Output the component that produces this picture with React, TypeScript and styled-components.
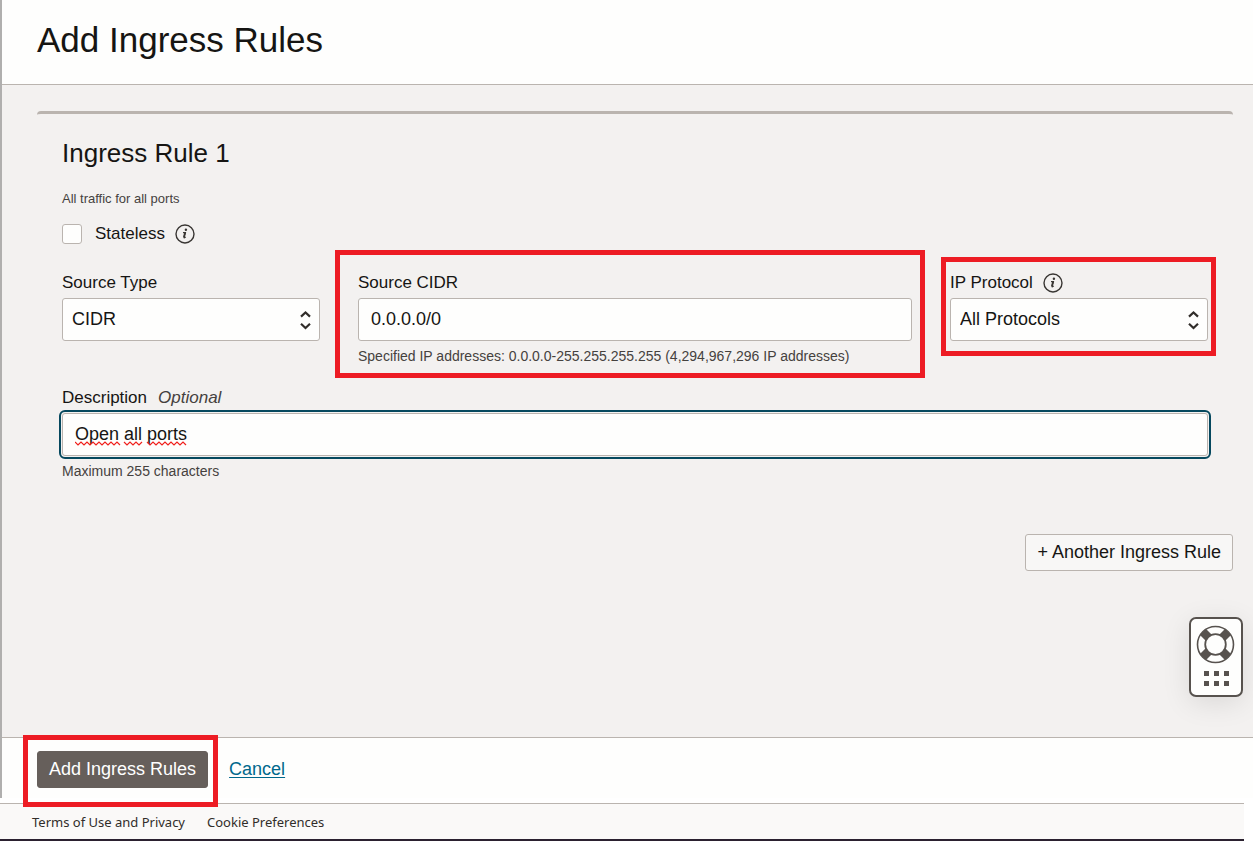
import React from 'react';
import styled, { createGlobalStyle } from 'styled-components';

const GlobalStyle = createGlobalStyle`
  *, *::before, *::after { box-sizing: border-box; }
  body {
    margin: 0;
    background: #ffffff;
    color: #161513;
    font-family: "Liberation Sans", Arial, sans-serif;
  }
`;

const Page = styled.div`
  display: flex;
  flex-direction: column;
  min-height: 100vh;
`;

const Panel = styled.form`
  position: relative;
  flex: 1;
  display: flex;
  flex-direction: column;
  margin-bottom: 5px;
  border-left: 2px solid #b0afae;
  background: #f3f1f0;
`;

const PanelHeader = styled.header`
  padding: 20px 35px 24px;
  border-bottom: 1px solid #bab4af;
  background: #fefefd;
`;

const Title = styled.h1`
  margin: 0;
  font-size: 35px;
  line-height: 40px;
  font-weight: 400;
`;

const PanelBody = styled.main`
  flex: 1;
  padding: 26px 20px 0 35px;
`;

const RuleCard = styled.section`
  padding: 23px 25px 54px;
  border-top: 3px solid #bab4af;
  border-radius: 4px 4px 0 0;
`;

const RuleTitle = styled.h2`
  margin: 0 0 20px;
  font-size: 26px;
  line-height: 32px;
  font-weight: 400;
`;

const Summary = styled.p`
  margin: 0 0 12px;
  font-size: 13px;
  line-height: 20px;
  color: #45413e;
`;

const CheckRow = styled.div`
  display: flex;
  align-items: center;
  height: 26px;
  margin-bottom: 26px;
`;

const Checkbox = styled.input`
  appearance: none;
  width: 20px;
  height: 20px;
  margin: 0 13px 0 0;
  border: 1px solid #bab4af;
  border-radius: 3px;
  background: #fefefd;
`;

const Label = styled.label`
  font-size: 17px;
  line-height: 20px;
`;

const InfoButton = styled.button`
  display: flex;
  margin: 0 0 0 10px;
  padding: 0;
  border: 0;
  background: none;
  color: #393633;
`;

const FieldGrid = styled.div`
  display: grid;
  grid-template-columns: 258px minmax(0, 1fr) 258px;
  column-gap: 38px;
  margin-bottom: 23px;
`;

const Field = styled.div`
  position: relative;
`;

const LabelRow = styled.div`
  display: flex;
  align-items: center;
  height: 20px;
  margin-bottom: 5px;
`;

const Optional = styled.em`
  margin-left: 11px;
  font-size: 17px;
  line-height: 20px;
  color: #45413e;
`;

const Control = styled.div`
  position: relative;
`;

const TextInput = styled.input<{ $focused?: boolean }>`
  display: block;
  width: 100%;
  height: 43px;
  padding: 0 12px;
  border: 1px solid #bab4af;
  border-radius: 3px;
  outline: ${(p) => (p.$focused ? '2px solid #05485e' : 'none')};
  outline-offset: 1px;
  background: #fefefd;
  color: #161513;
  font: 18px "Liberation Sans", Arial, sans-serif;
`;

const Select = styled.select`
  appearance: none;
  display: block;
  width: 100%;
  height: 43px;
  padding: 0 32px 2px 9px;
  border: 1px solid #bab4af;
  border-radius: 3px;
  background: #fefefd;
  color: #161513;
  font: 18px "Liberation Sans", Arial, sans-serif;
`;

const SelectArrows = styled.svg`
  position: absolute;
  top: 12px;
  right: 8px;
  pointer-events: none;
`;

const Squiggles = styled.svg`
  position: absolute;
  top: 28px;
  left: 13px;
  pointer-events: none;
`;

const Hint = styled.p`
  margin: 6px 0 0;
  font-size: 14px;
  line-height: 18px;
  color: #45413e;
`;

const Highlight = styled.span<{ $inset: string }>`
  position: absolute;
  inset: ${(p) => p.$inset};
  border: 5px solid #ed1c24;
  pointer-events: none;
`;

const AddRow = styled.div`
  display: flex;
  justify-content: flex-end;
`;

const Button = styled.button<{ $primary?: boolean }>`
  height: 37px;
  padding: 0 11px 1px;
  border: 1px solid ${(p) => (p.$primary ? '#665f5b' : '#bab4af')};
  border-radius: 3px;
  background: ${(p) => (p.$primary ? '#665f5b' : '#f8f7f6')};
  color: ${(p) => (p.$primary ? '#ffffff' : '#161513')};
  font: 18px "Liberation Sans", Arial, sans-serif;
  white-space: nowrap;
`;

const Actions = styled.div`
  display: flex;
  align-items: flex-start;
  gap: 21px;
  height: 61px;
  padding: 13px 35px 0;
  border-top: 1px solid #bab4af;
  background: #fefefd;
`;

const Submit = styled.div`
  position: relative;
`;

const CancelLink = styled.a`
  color: #00688c;
  font-size: 18px;
  line-height: 36px;
  text-underline-offset: 2px;
`;

const HelpWidget = styled.button`
  position: absolute;
  right: 10px;
  bottom: 101px;
  display: flex;
  flex-direction: column;
  align-items: center;
  width: 54px;
  height: 80px;
  padding: 0;
  border: 2px solid #57524e;
  border-radius: 7px;
  background: #fefefd;
  box-shadow: 0 6px 28px rgba(0, 0, 0, 0.1);
`;

const PageFooter = styled.footer`
  display: flex;
  gap: 22px;
  height: 38px;
  margin-right: 9px;
  padding: 8px 32px 0;
  border-top: 1px solid #bab4af;
  border-bottom: 2px solid #2b2130;
  background: #faf9f8;
`;

const FooterLink = styled.a`
  color: #312d2a;
  font: 13px/20px "Noto Sans", "Segoe UI", sans-serif;
  text-decoration: none;
`;

function Info({ about }: { about: string }) {
  return (
    <InfoButton type="button" aria-label={`About ${about}`}>
      <svg width="20" height="20" viewBox="0 0 20 20" fill="none" stroke="currentColor">
        <circle cx="10" cy="10" r="9" strokeWidth="1.4" />
        <circle cx="10.9" cy="5.7" r="1.2" fill="currentColor" stroke="none" />
        <path d="M8 8.600h2.400L9 13.200c-.2.8.4.9 1.800-.3" strokeWidth="1.2" />
        <path d="M10.200 8.600 8.900 13" strokeWidth="1.8" />
      </svg>
    </InfoButton>
  );
}

function Arrows() {
  return (
    <SelectArrows width="12" height="20" viewBox="0 0 12 20" fill="none" stroke="#312d2a" strokeWidth="2.2" aria-hidden="true">
      <path d="M1 6.600 5.500 2.400l4.500 4.200M1 13.800l4.500 4.200 4.500-4.200" />
    </SelectArrows>
  );
}

function zigzag(from: number, to: number) {
  let d = `M${from} 1`;
  for (let x = from + 3, up = false; x <= to; x += 3, up = !up) d += `L${x} ${up ? 1 : 4}`;
  return d;
}

const misspelled = [[0, 45], [49, 67], [72, 112]];

export default function App() {
  return (
    <Page>
      <GlobalStyle />
      <Panel onSubmit={(e) => e.preventDefault()}>
        <PanelHeader>
          <Title>Add Ingress Rules</Title>
        </PanelHeader>
        <PanelBody>
          <RuleCard>
            <RuleTitle>Ingress Rule 1</RuleTitle>
            <Summary>All traffic for all ports</Summary>
            <CheckRow>
              <Checkbox id="stateless" type="checkbox" />
              <Label htmlFor="stateless">Stateless</Label>
              <Info about="Stateless" />
            </CheckRow>
            <FieldGrid>
              <Field>
                <LabelRow>
                  <Label htmlFor="source-type">Source Type</Label>
                </LabelRow>
                <Control>
                  <Select id="source-type" defaultValue="CIDR">
                    <option>CIDR</option>
                  </Select>
                  <Arrows />
                </Control>
              </Field>
              <Field>
                <LabelRow>
                  <Label htmlFor="source-cidr">Source CIDR</Label>
                </LabelRow>
                <TextInput id="source-cidr" type="text" defaultValue="0.0.0.0/0" />
                <Hint>Specified IP addresses: 0.0.0.0-255.255.255.255 (4,294,967,296 IP addresses)</Hint>
                <Highlight $inset="-23px -13px -13px -23px" />
              </Field>
              <Field>
                <LabelRow>
                  <Label htmlFor="ip-protocol">IP Protocol</Label>
                  <Info about="IP Protocol" />
                </LabelRow>
                <Control>
                  <Select id="ip-protocol" defaultValue="All Protocols">
                    <option>All Protocols</option>
                  </Select>
                  <Arrows />
                  <Highlight $inset="-41px -8px -15px -9px" />
                </Control>
              </Field>
            </FieldGrid>
            <Field>
              <LabelRow>
                <Label htmlFor="description">Description</Label>
                <Optional>Optional</Optional>
              </LabelRow>
              <Control>
                <TextInput id="description" type="text" defaultValue="Open all ports" spellCheck={false} maxLength={255} $focused />
                <Squiggles width="113" height="5" viewBox="0 0 113 5" fill="none" stroke="#f0201c" strokeWidth="1.2" aria-hidden="true">
                  {misspelled.map(([from, to]) => (
                    <path key={from} d={zigzag(from, to)} />
                  ))}
                </Squiggles>
              </Control>
              <Hint>Maximum 255 characters</Hint>
            </Field>
          </RuleCard>
          <AddRow>
            <Button type="button">+ Another Ingress Rule</Button>
          </AddRow>
        </PanelBody>
        <Actions>
          <Submit>
            <Button type="submit" $primary>Add Ingress Rules</Button>
            <Highlight $inset="-16px -10px -19px -14px" />
          </Submit>
          <CancelLink href="#cancel">Cancel</CancelLink>
        </Actions>
        <HelpWidget type="button" aria-label="Help">
          <svg width="50" height="76" viewBox="0 0 50 76" fill="none" stroke="#57524e">
            <path d="M12 13l5.500 5.500M37 13l-5.500 5.500M12 38l5.500-5.500M37 38l-5.500-5.500" strokeWidth="8.500" />
            <circle cx="24.500" cy="25.500" r="18" strokeWidth="1.600" />
            <circle cx="24.500" cy="25.500" r="10.300" strokeWidth="1.800" fill="#fefefd" />
            <path d="M13 54.500h5m5 0h5m5 0h5M13 64.500h5m5 0h5m5 0h5" strokeWidth="5" />
          </svg>
        </HelpWidget>
      </Panel>
      <PageFooter>
        <FooterLink href="#terms">Terms of Use and Privacy</FooterLink>
        <FooterLink href="#cookies">Cookie Preferences</FooterLink>
      </PageFooter>
    </Page>
  );
}
